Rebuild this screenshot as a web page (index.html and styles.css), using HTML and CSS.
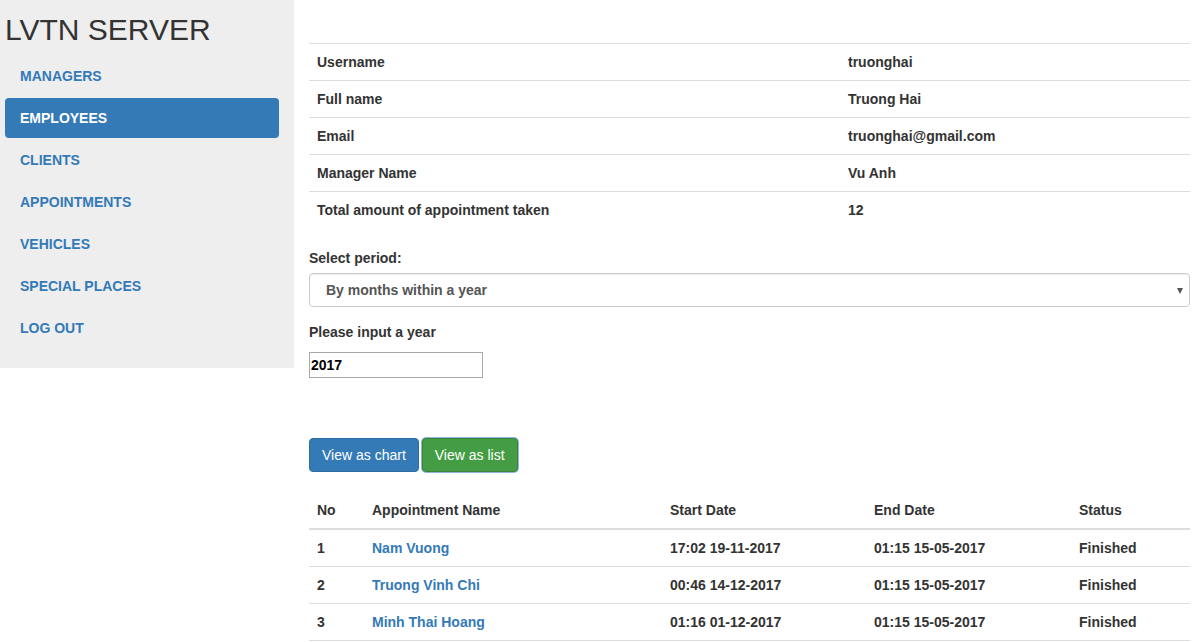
FILE: index.html
```html
<!DOCTYPE html>
<html>
<head>
<meta charset="utf-8">
<title>LVTN SERVER</title>
<link rel="stylesheet" href="styles.css">
</head>
<body>
<div class="page">
  <aside class="sidebar">
    <h2 class="brand">LVTN SERVER</h2>
    <ul class="nav">
      <li><a href="#">MANAGERS</a></li>
      <li class="active"><a href="#">EMPLOYEES</a></li>
      <li><a href="#">CLIENTS</a></li>
      <li><a href="#">APPOINTMENTS</a></li>
      <li><a href="#">VEHICLES</a></li>
      <li><a href="#">SPECIAL PLACES</a></li>
      <li><a href="#">LOG OUT</a></li>
    </ul>
  </aside>
  <main class="main">
    <table class="table info">
      <colgroup><col class="c-key"><col></colgroup>
      <tr><td>Username</td><td>truonghai</td></tr>
      <tr><td>Full name</td><td>Truong Hai</td></tr>
      <tr><td>Email</td><td>truonghai@gmail.com</td></tr>
      <tr><td>Manager Name</td><td>Vu Anh</td></tr>
      <tr><td>Total amount of appointment taken</td><td>12</td></tr>
    </table>

    <div class="form-group">
      <label class="lbl">Select period:</label>
      <div class="select-wrap">
        <select class="form-control">
          <option>By months within a year</option>
          <option>By years</option>
        </select>
        <span class="caret"></span>
      </div>
    </div>

    <div class="form-group year">
      <label class="lbl">Please input a year</label>
      <input class="year-input" type="text" value="2017">
    </div>

    <div class="btns">
      <button class="btn btn-primary">View as chart</button>
      <button class="btn btn-success">View as list</button>
    </div>

    <table class="table list">
      <colgroup>
        <col class="c-no"><col class="c-name"><col class="c-start"><col class="c-end"><col>
      </colgroup>
      <thead>
        <tr><th>No</th><th>Appointment Name</th><th>Start Date</th><th>End Date</th><th>Status</th></tr>
      </thead>
      <tbody>
        <tr><td>1</td><td><a href="#">Nam Vuong</a></td><td>17:02 19-11-2017</td><td>01:15 15-05-2017</td><td>Finished</td></tr>
        <tr><td>2</td><td><a href="#">Truong Vinh Chi</a></td><td>00:46 14-12-2017</td><td>01:15 15-05-2017</td><td>Finished</td></tr>
        <tr><td>3</td><td><a href="#">Minh Thai Hoang</a></td><td>01:16 01-12-2017</td><td>01:15 15-05-2017</td><td>Finished</td></tr>
      </tbody>
    </table>
  </main>
</div>
</body>
</html>
```

FILE: styles.css
```css
* { box-sizing: border-box; }
html, body { margin: 0; padding: 0; }
body {
  font-family: "Liberation Sans", Arial, Helvetica, sans-serif;
  font-size: 14px;
  line-height: 20px;
  color: #333;
  background: #fff;
}
a { color: #337ab7; text-decoration: none; }

.page { display: flex; align-items: flex-start; }

.sidebar {
  width: 294px;
  flex: none;
  background: #eeeeee;
  padding: 13px 15px 20px 5px;
}
.brand {
  margin: 0 0 10px 0;
  font-size: 30px;
  line-height: 33px;
  font-weight: normal;
  color: #333;
}
.nav { list-style: none; margin: 0; padding: 0; }
.nav li + li { margin-top: 2px; }
.nav a {
  display: block;
  padding: 10px 15px;
  border-radius: 4px;
  font-weight: bold;
  color: #337ab7;
}
.nav li.active a { background: #337ab7; color: #fff; }

.main {
  flex: 1;
  padding: 43px 14px 0 15px;
  font-weight: bold;
}

.table { width: 100%; border-collapse: collapse; border-spacing: 0; }
.table td, .table th {
  padding: 8px;
  line-height: 20px;
  text-align: left;
  vertical-align: top;
  border-top: 1px solid #ddd;
}
.info { margin-bottom: 20px; }
.info .c-key { width: 531px; }

.form-group { margin-bottom: 15px; }
.lbl { display: block; margin-bottom: 5px; font-weight: bold; }
.select-wrap { position: relative; }
.form-control {
  display: block;
  width: 100%;
  height: 34px;
  padding: 6px 12px 6px 16px;
  font-family: inherit;
  font-size: 14px;
  font-weight: bold;
  color: #555;
  background: #fff;
  border: 1px solid #ccc;
  border-radius: 4px;
  box-shadow: inset 0 1px 1px rgba(0,0,0,.075);
  -webkit-appearance: none;
  appearance: none;
}
.caret {
  position: absolute;
  right: 7px;
  top: 15px;
  width: 0;
  height: 0;
  border-left: 3px solid transparent;
  border-right: 3px solid transparent;
  border-top: 6px solid #555;
}
.year .lbl { margin-bottom: 10px; }
.year-input {
  display: block;
  width: 174px;
  height: 26px;
  padding: 1px 1px;
  font-family: inherit;
  font-size: 14px;
  font-weight: bold;
  color: #000;
  border: 1px solid #a9a9a9;
  border-radius: 0;
  background: #fff;
}

.btns { margin-top: 60px; margin-bottom: 20px; display: flex; gap: 3px; }
.btn {
  height: 34px;
  padding: 6px 12px;
  font-family: inherit;
  font-size: 14px;
  line-height: 20px;
  font-weight: normal;
  color: #fff;
  border: 1px solid transparent;
  border-radius: 4px;
  cursor: pointer;
}
.btn-primary { background: #337ab7; border-color: #2e6da4; }
.btn-success {
  background: #449d44;
  border-color: #398439;
  box-shadow: 0 0 0 1px #8fb4e6;
}

.list .c-no { width: 55px; }
.list .c-name { width: 298px; }
.list .c-start { width: 204px; }
.list .c-end { width: 205px; }
.list thead th { border-top: 0; border-bottom: 2px solid #ddd; vertical-align: bottom; }
.list tbody tr:last-child td { border-bottom: 1px solid #ddd; }
```
